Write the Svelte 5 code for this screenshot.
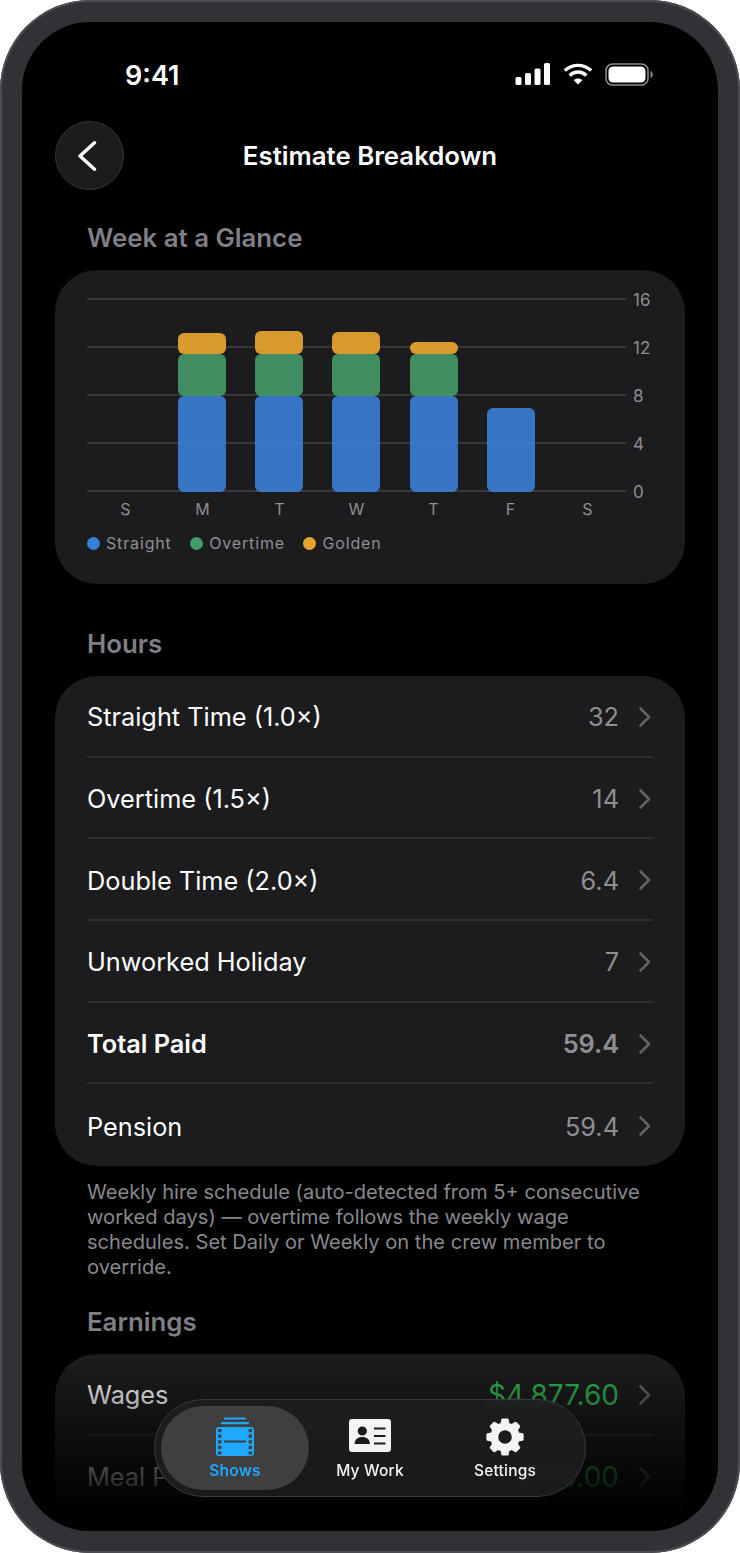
<script>
	const days = [
		{ label: 'S', straight: 0, overtime: 0, golden: 0 },
		{ label: 'M', straight: 8, overtime: 3.5, golden: 1.75 },
		{ label: 'T', straight: 8, overtime: 3.5, golden: 1.9 },
		{ label: 'W', straight: 8, overtime: 3.5, golden: 1.8 },
		{ label: 'T', straight: 8, overtime: 3.5, golden: 1 },
		{ label: 'F', straight: 7, overtime: 0, golden: 0 },
		{ label: 'S', straight: 0, overtime: 0, golden: 0 }
	];
	const ticks = [16, 12, 8, 4, 0];
	const legend = [
		{ name: 'Straight', color: '#3a7fd5' },
		{ name: 'Overtime', color: '#449a68' },
		{ name: 'Golden', color: '#e5a22f' }
	];
	const hours = [
		{ label: 'Straight Time (1.0×)', value: '32' },
		{ label: 'Overtime (1.5×)', value: '14' },
		{ label: 'Double Time (2.0×)', value: '6.4' },
		{ label: 'Unworked Holiday', value: '7' },
		{ label: 'Total Paid', value: '59.4', bold: true },
		{ label: 'Pension', value: '59.4' }
	];
	const earnings = [
		{ label: 'Wages', value: '$4,877.60' },
		{ label: 'Meal Penalty', value: '$150.00' }
	];
	const hourPx = 12;

	// eight tooth gear outline, the stroke rounds its corners
	function gearPath(cx, cy, outer, inner) {
		const teeth = 8;
		const pts = [];
		for (let i = 0; i < teeth; i++) {
			const a = (i / teeth) * Math.PI * 2 - Math.PI / 2;
			const step = Math.PI / teeth;
			const corners = [
				[inner, a - step * 0.62],
				[outer, a - step * 0.36],
				[outer, a + step * 0.36],
				[inner, a + step * 0.62]
			];
			for (const [r, t] of corners) {
				pts.push(`${(cx + r * Math.cos(t)).toFixed(2)} ${(cy + r * Math.sin(t)).toFixed(2)}`);
			}
		}
		return 'M' + pts.join(' L') + ' Z';
	}
	const gear = gearPath(20, 20, 17.6, 13.6);
</script>

{#snippet chevron()}
	<svg class="chevron" width="14" height="22" viewBox="0 0 14 22" fill="none">
		<path d="M2.5 2.5 L11 11 L2.5 19.5" stroke="currentColor" stroke-width="2.6" stroke-linecap="round" stroke-linejoin="round" />
	</svg>
{/snippet}

<div class="device">
	<div class="screen">
		<div class="status">
			<span class="time">9:41</span>
			<div class="status-icons">
				<svg width="36" height="22" viewBox="0 0 36 22" fill="#fff">
					<rect x="0.5" y="14" width="6" height="8" rx="1.5" />
					<rect x="10" y="10" width="6" height="12" rx="1.5" />
					<rect x="19.5" y="5.5" width="6" height="16.5" rx="1.5" />
					<rect x="29" y="0" width="6" height="22" rx="1.5" />
				</svg>
				<svg width="30" height="22" viewBox="0 0 30 22" fill="none" stroke="#fff" stroke-width="3.4">
					<path d="M1.8 7.6 C9.4 0.6 20.6 0.6 28.2 7.6" />
					<path d="M6.6 12.4 C11.6 7.8 18.4 7.8 23.4 12.4" />
					<path d="M15 21.5 L10.6 17 C13.2 14.9 16.8 14.9 19.4 17 Z" fill="#fff" stroke="none" />
				</svg>
				<svg width="48" height="23" viewBox="0 0 48 23" fill="none">
					<rect x="1" y="1" width="42" height="21" rx="6.5" stroke="#8a8a8e" stroke-width="1.6" />
					<rect x="3.5" y="3.5" width="37" height="16" rx="4.5" fill="#fff" />
					<path d="M45.5 8 C47 8.6 47.8 10 47.8 11.5 C47.8 13 47 14.4 45.5 15 Z" fill="#8a8a8e" />
				</svg>
			</div>
		</div>

		<div class="nav">
			<button class="back" aria-label="Back">
				<svg width="20" height="32" viewBox="0 0 20 32" fill="none">
					<path d="M16.5 2.7 L2 16 L16.5 29.3" stroke="#fff" stroke-width="3.4" stroke-linecap="round" stroke-linejoin="round" />
				</svg>
			</button>
			<h1>Estimate Breakdown</h1>
		</div>

		<div class="content">
			<h2 class="first">Week at a Glance</h2>
			<section class="card chart-card">
				<div class="chart">
					<div class="plot">
						<div class="grid">
							{#each ticks as tick}
								<div class="grid-line"><span>{tick}</span></div>
							{/each}
						</div>
						<div class="bars">
							{#each days as day}
								<div class="col">
									{#if day.golden}
										<div class="seg golden" style="height:{day.golden * hourPx}px"></div>
									{/if}
									{#if day.overtime}
										<div class="seg overtime" style="height:{day.overtime * hourPx}px"></div>
									{/if}
									{#if day.straight}
										<div class="seg straight" style="height:{day.straight * hourPx}px"></div>
									{/if}
								</div>
							{/each}
						</div>
					</div>
					<div class="days">
						{#each days as day}
							<span>{day.label}</span>
						{/each}
					</div>
				</div>
				<div class="legend">
					{#each legend as item}
						<div class="legend-item">
							<i style="background:{item.color}"></i>{item.name}
						</div>
					{/each}
				</div>
			</section>

			<h2>Hours</h2>
			<section class="card list">
				{#each hours as row}
					<div class="row" class:bold={row.bold}>
						<span class="label">{row.label}</span>
						<span class="value">{row.value}</span>
						{@render chevron()}
					</div>
				{/each}
			</section>
			<p class="note">Weekly hire schedule (auto-detected from 5+ consecutive worked days) — overtime follows the weekly wage schedules. Set Daily or Weekly on the crew member to override.</p>

			<h2 class="earnings">Earnings</h2>
			<section class="card list open">
				{#each earnings as row}
					<div class="row">
						<span class="label">{row.label}</span>
						<span class="value money">{row.value}</span>
						{@render chevron()}
					</div>
				{/each}
			</section>
		</div>

		<div class="fade"></div>

		<div class="tabbar">
			<div class="tab active">
				<svg width="40" height="40" viewBox="0 0 40 40" fill="#1fa8ff">
					<rect x="9" y="0.5" width="22" height="2" rx="1" />
					<rect x="6" y="5" width="28" height="2.2" rx="1" />
					<path fill-rule="evenodd" d="M4 10 H36 A3 3 0 0 1 39 13 V36 A3 3 0 0 1 36 39 H4 A3 3 0 0 1 1 36 V13 A3 3 0 0 1 4 10 Z M3 12 v3.2 h3.4 V12 Z M3 17.6 v3.2 h3.4 V17.6 Z M3 23.2 v3.2 h3.4 V23.2 Z M3 28.8 v3.2 h3.4 V28.8 Z M3 34.4 v3.2 h3.4 V34.4 Z M33.6 12 v3.2 h3.4 V12 Z M33.6 17.6 v3.2 h3.4 V17.6 Z M33.6 23.2 v3.2 h3.4 V23.2 Z M33.6 28.8 v3.2 h3.4 V28.8 Z M33.6 34.4 v3.2 h3.4 V34.4 Z M9 23.6 v1.8 h22 v-1.8 Z" />
				</svg>
				<span>Shows</span>
			</div>
			<div class="tab">
				<svg width="44" height="39" viewBox="0 0 44 39" fill="#f4f4f4">
					<path fill-rule="evenodd" d="M4 1 H40 A3 3 0 0 1 43 4 V31 A3 3 0 0 1 40 34 H4 A3 3 0 0 1 1 31 V4 A3 3 0 0 1 4 1 Z M14.3 8.4 A4.6 4.6 0 1 0 14.3 17.6 A4.6 4.6 0 1 0 14.3 8.4 Z M6.6 26 H22 C22 21.6 18.6 19 14.3 19 C10 19 6.6 21.6 6.6 26 Z M26 9.4 v2 h11.5 v-2 Z M26 17 v2 h11.5 v-2 Z M26 24.4 v2 h11.5 v-2 Z" />
				</svg>
				<span>My Work</span>
			</div>
			<div class="tab">
				<svg width="40" height="40" viewBox="0 0 40 40">
					<path fill-rule="evenodd" fill="#f4f4f4" stroke="#f4f4f4" stroke-width="2.4" stroke-linejoin="round" d="{gear} M20 12 a8 8 0 1 0 0 16 a8 8 0 1 0 0 -16 Z" />
				</svg>
				<span>Settings</span>
			</div>
		</div>
	</div>
</div>

<style>
	:global(body) {
		margin: 0;
		background: #fff;
		font-family: Inter, "Liberation Sans", sans-serif;
	}

	.device {
		width: 740px;
		height: 1553px;
		box-sizing: border-box;
		padding: 22px;
		background: #313136;
		border-radius: 90px;
		box-shadow: inset 0 0 0 2px #4c4c52;
		overflow: hidden;
	}

	.screen {
		position: relative;
		height: 1509px;
		background: #000;
		border-radius: 68px;
		overflow: hidden;
		color: #fff;
	}

	.status {
		display: flex;
		justify-content: space-between;
		align-items: center;
		height: 32px;
		padding: 37px 65px 0 103px;
	}

	.time {
		font-size: 27px;
		font-weight: 600;
	}

	.status-icons {
		display: flex;
		align-items: center;
		gap: 12px;
		margin-top: -2px;
	}

	.nav {
		position: relative;
		display: flex;
		align-items: center;
		justify-content: center;
		height: 69px;
		margin-top: 30px;
	}

	.back {
		position: absolute;
		left: 33px;
		top: 0;
		width: 69px;
		height: 69px;
		box-sizing: border-box;
		padding: 0 4px 0 0;
		display: flex;
		align-items: center;
		justify-content: center;
		background: #1c1c1e;
		border: 1.5px solid #343436;
		border-radius: 50%;
	}

	h1 {
		margin: 0;
		font-size: 25.8px;
		font-weight: 600;
	}

	.content {
		padding: 0 33px;
	}

	h2 {
		margin: 44px 0 16px 32px;
		font-size: 25.8px;
		line-height: 32px;
		font-weight: 600;
		color: #7f7f85;
	}

	h2.first {
		margin-top: 32px;
	}

	h2.earnings {
		margin-top: 26px;
	}

	.card {
		background: #1c1c1e;
		border-radius: 42px;
	}

	.chart-card {
		height: 314px;
		box-sizing: border-box;
		padding: 28px 0 0 32px;
	}

	.chart {
		width: 539px;
	}

	.plot {
		position: relative;
		height: 194px;
	}

	.grid {
		position: absolute;
		inset: 0;
		display: flex;
		flex-direction: column;
		justify-content: space-between;
	}

	.grid-line {
		position: relative;
		height: 2px;
		background: #38383a;
	}

	.grid-line span {
		position: absolute;
		left: 546px;
		top: -9px;
		font-size: 17px;
		line-height: 22px;
		color: #8e8e93;
	}

	.bars {
		position: absolute;
		inset: 0 -1px;
		display: grid;
		grid-template-columns: repeat(7, 1fr);
	}

	.col {
		display: flex;
		flex-direction: column;
		justify-content: flex-end;
		align-items: center;
	}

	.seg {
		width: 48px;
		border-radius: 6px;
		opacity: 0.9;
	}

	.straight {
		background: #3a7fd5;
	}

	.overtime {
		background: #449a68;
	}

	.golden {
		background: #eea92f;
	}

	.days {
		display: grid;
		grid-template-columns: repeat(7, 1fr);
		margin-top: 6px;
		text-align: center;
		font-size: 16px;
		line-height: 22px;
		color: #8e8e93;
	}

	.legend {
		display: flex;
		gap: 18.5px;
		margin-top: 12px;
		font-size: 16px;
		line-height: 22px;
		letter-spacing: 0.85px;
		color: #8e8e93;
	}

	.legend-item {
		display: flex;
		align-items: center;
		gap: 6px;
	}

	.legend-item i {
		width: 13px;
		height: 13px;
		border-radius: 50%;
	}

	.list {
		padding: 0 32px;
	}

	.list.open {
		padding-bottom: 40px;
	}

	.row {
		display: flex;
		align-items: center;
		box-sizing: border-box;
		height: 81.7px;
		padding-top: 2px;
		border-bottom: 2px solid #2e2e30;
		font-size: 25.3px;
		color: #fff;
	}

	.row:last-child {
		border-bottom: none;
	}

	.list.open .row:last-child {
		border-bottom: 2px solid #2e2e30;
	}

	.row .label {
		flex: 1;
	}

	.row .value {
		color: #8e8e93;
		margin-right: 19px;
	}

	.row.bold {
		font-weight: 600;
	}

	.row .money {
		color: #30b850;
		font-size: 28px;
	}

	.chevron {
		color: #636366;
		margin-right: 1px;
	}

	.note {
		margin: 14px 40px 0 32px;
		font-size: 20.1px;
		line-height: 25px;
		color: #88888d;
	}

	.fade {
		position: absolute;
		left: 0;
		right: 0;
		bottom: 0;
		height: 175px;
		background: linear-gradient(to bottom, rgba(0, 0, 0, 0), rgba(0, 0, 0, 0.98) 88%);
		pointer-events: none;
	}

	.tabbar {
		position: absolute;
		left: 132px;
		bottom: 34px;
		width: 432px;
		height: 98px;
		box-sizing: border-box;
		padding: 6px;
		display: flex;
		background: rgba(30, 30, 32, 0.86);
		border: 1.5px solid #3a3a3c;
		border-radius: 49px;
		backdrop-filter: blur(3px);
	}

	.tab {
		flex: none;
		width: 148px;
		margin-left: -13px;
		display: flex;
		flex-direction: column;
		align-items: center;
		justify-content: flex-end;
		gap: 4px;
		padding-bottom: 9px;
		box-sizing: border-box;
		font-size: 15.5px;
		font-weight: 500;
		line-height: 20px;
		letter-spacing: 0.2px;
		color: #f4f4f4;
	}

	.tab.active {
		margin-left: 0;
		background: #3f3f40;
		border-radius: 42px;
		color: #1fa8ff;
		font-weight: 600;
	}
</style>
